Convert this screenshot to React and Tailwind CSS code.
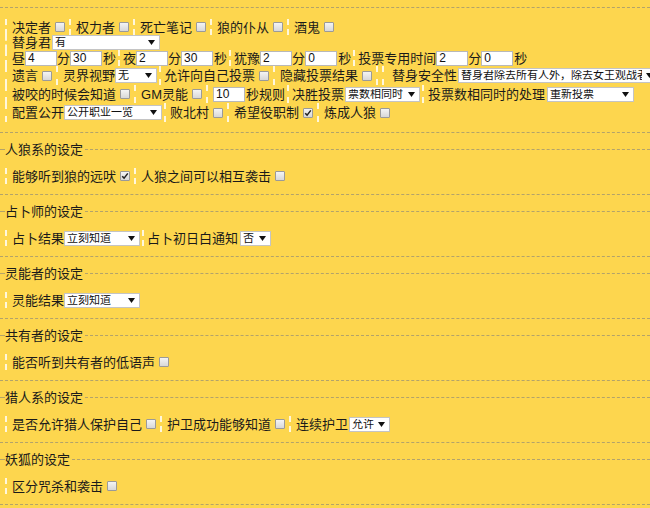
import React from 'react'

const FONT = { fontFamily: '"Liberation Sans", "Noto Sans CJK SC", sans-serif' }

function Cb({ checked }) {
  return (
    <span className="ml-[4px] inline-flex h-[10px] w-[10px] shrink-0 items-center justify-center rounded-[1px] border border-[#9a9a9a] bg-gradient-to-b from-[#f4f4f4] to-[#d8d8d8]">
      {checked && (
        <svg width="8" height="8" viewBox="0 0 8 8">
          <path d="M1.2 4.2 L3.1 6.1 L6.8 1.4" fill="none" stroke="#222" strokeWidth="1.5" />
        </svg>
      )}
    </span>
  )
}

function Sel({ w, value, className = '' }) {
  return (
    <span
      className={`flex h-[15px] shrink-0 items-center justify-between overflow-hidden border border-[#c4c4c4] bg-white pl-[2px] pr-[4px] text-[11px] leading-none text-[#111] ${className}`}
      style={{ width: w }}
    >
      <span className="overflow-hidden whitespace-nowrap">{value}</span>
      <svg width="7" height="5" viewBox="0 0 7 5" className="ml-1 shrink-0">
        <path d="M0 0 H7 L3.5 5 Z" fill="#111" />
      </svg>
    </span>
  )
}

function Inp({ value }) {
  return (
    <span className="flex h-[15px] w-[32px] shrink-0 items-center border border-[#b8b8b8] bg-white pl-[2px] text-[12px] leading-none text-[#111]">
      {value}
    </span>
  )
}

function Item({ className = 'ml-[4px] pl-[5px]', children }) {
  return (
    <span className={`flex items-center self-stretch border-l-2 border-dashed border-white/80 ${className}`}>
      {children}
    </span>
  )
}

function Row({ h = 'h-[16px]', children }) {
  return <div className={`flex items-center whitespace-nowrap pl-[5px] ${h}`}>{children}</div>
}

function First({ children }) {
  return <Item className="pl-[5px]">{children}</Item>
}

function Section({ title, children }) {
  return (
    <div className="border-b border-dashed border-[#b3a36a] pb-[10px]">
      <div className="mt-[8px] flex h-[16px] items-center">
        <div className="w-[5px] border-t border-dashed border-[#b3a36a]" />
        <span className="text-[13px] leading-none">{title}</span>
        <div className="ml-[2px] flex-1 border-t border-dashed border-[#b3a36a]" />
      </div>
      <div className="mt-[11px]">
        <Row>{children}</Row>
      </div>
    </div>
  )
}

const TIGHT = 'ml-[2px] pl-[3px]'

export default function App() {
  return (
    <div className="h-[508px] w-[650px] overflow-hidden bg-[#fdd64e] text-[13px] leading-none text-[#1a1a1a]" style={FONT}>
      <div className="mt-[7px] border-y border-dashed border-[#b3a36a] pb-[10px] pt-[11px]">
        <Row>
          <First>决定者<Cb /></First>
          <Item>权力者<Cb /></Item>
          <Item>死亡笔记<Cb /></Item>
          <Item>狼的仆从<Cb /></Item>
          <Item>酒鬼<Cb /></Item>
        </Row>
        <Row h="h-[15px]">
          <First>替身君<Sel w={108} value="有" className="ml-[1px]" /></First>
        </Row>
        <Row>
          <First>昼<Inp value="4" />分<Inp value="30" /><span className="ml-[1px]">秒</span></First>
          <Item className={TIGHT}>夜<Inp value="2" />分<Inp value="30" /><span className="ml-[1px]">秒</span></Item>
          <Item className={TIGHT}>犹豫<Inp value="2" />分<Inp value="0" /><span className="ml-[1px]">秒</span></Item>
          <Item className={TIGHT}>投票专用时间<Inp value="2" />分<Inp value="0" /><span className="ml-[1px]">秒</span></Item>
        </Row>
        <Row h="h-[19px]">
          <First>遗言<Cb /></First>
          <Item>灵界视野<Sel w={42} value="无" /></Item>
          <Item className={TIGHT}>允许向自己投票<Cb /></Item>
          <Item>隐藏投票结果<Cb /></Item>
          <Item className="ml-[4px] pl-[2px]" />
          <Item className="ml-[2px] pl-[8px]">替身安全性<Sel w={200} value="替身君除去所有人外，除去女王观战者" className="ml-[1px]" /></Item>
        </Row>
        <Row h="h-[18px]">
          <First>被咬的时候会知道<Cb /></First>
          <Item>GM灵能<Cb /></Item>
          <Item><Inp value="10" /><span className="ml-[1px]">秒规则</span></Item>
          <Item className={TIGHT}>决胜投票<Sel w={75} value="票数相同时" className="ml-[1px]" /></Item>
          <Item className="ml-[2px] pl-[4px]">投票数相同时的处理<Sel w={87} value="重新投票" className="ml-[2px]" /></Item>
        </Row>
        <Row h="h-[19px]">
          <First>配置公开<Sel w={98} value="公开职业一览" /></First>
          <Item className="ml-[2px] pl-[4px]">败北村<Cb /></Item>
          <Item>希望役职制<Cb checked /></Item>
          <Item>炼成人狼<Cb /></Item>
        </Row>
      </div>

      <Section title="人狼系的设定">
        <First>能够听到狼的远吠<Cb checked /></First>
        <Item>人狼之间可以相互袭击<Cb /></Item>
      </Section>

      <Section title="占卜师的设定">
        <First>占卜结果<Sel w={76} value="立刻知道" /></First>
        <Item className={TIGHT}>占卜初日白通知<Sel w={31} value="否" className="ml-[2px]" /></Item>
      </Section>

      <Section title="灵能者的设定">
        <First>灵能结果<Sel w={76} value="立刻知道" /></First>
      </Section>

      <Section title="共有者的设定">
        <First>能否听到共有者的低语声<Cb /></First>
      </Section>

      <Section title="猎人系的设定">
        <First>是否允许猎人保护自己<Cb /></First>
        <Item>护卫成功能够知道<Cb /></Item>
        <Item>连续护卫<Sel w={41} value="允许" className="ml-[1px]" /></Item>
      </Section>

      <Section title="妖狐的设定">
        <First>区分咒杀和袭击<Cb /></First>
      </Section>
    </div>
  )
}
